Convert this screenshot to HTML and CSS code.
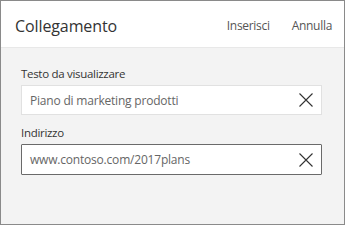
FILE: index.html
```html
<!DOCTYPE html>
<html lang="it">
<head>
<meta charset="utf-8">
<title>Collegamento</title>
<link rel="stylesheet" href="styles.css">
</head>
<body>
<div class="dialog">
  <header class="header">
    <h1 class="title">Collegamento</h1>
    <nav class="actions">
      <span class="action">Inserisci</span>
      <span class="action">Annulla</span>
    </nav>
  </header>
  <main class="form">
    <div class="field">
      <label class="label">Testo da visualizzare</label>
      <div class="input">
        <span class="value">Piano di marketing prodotti</span>
        <svg class="clear" width="14" height="14" viewBox="0 0 14 14"><path d="M0.5 0.5L13.5 13.5M13.5 0.5L0.5 13.5" stroke="#333" stroke-width="1.1" fill="none"/></svg>
      </div>
    </div>
    <div class="field">
      <label class="label">Indirizzo</label>
      <div class="input focused">
        <span class="value">www.contoso.com/2017plans</span>
        <svg class="clear" width="14" height="14" viewBox="0 0 14 14"><path d="M0.5 0.5L13.5 13.5M13.5 0.5L0.5 13.5" stroke="#333" stroke-width="1.1" fill="none"/></svg>
      </div>
    </div>
  </main>
</div>
</body>
</html>
```
FILE: styles.css
```css
* { box-sizing: border-box; }
html, body { margin: 0; padding: 0; }
body { font-family: "Open Sans", "Noto Sans", sans-serif; }
.dialog {
  width: 345px;
  height: 225px;
  border: 1px solid #8a8a8a;
  background: #f3f3f3;
  display: flex;
  flex-direction: column;
}
.header {
  height: 47px;
  flex: none;
  background: #fff;
  border-bottom: 1px solid #e8e8e8;
  display: flex;
  align-items: center;
  justify-content: space-between;
  padding: 3px 12px 0 14px;
}
.title {
  margin: 0;
  font-size: 16px;
  font-weight: normal;
  color: #333;
  letter-spacing: -0.1px;
}
.actions {
  display: flex;
  gap: 22px;
  font-size: 12px;
  color: #555;
  letter-spacing: -0.3px;
}
.form {
  padding: 18px 22px 0 20px;
  display: flex;
  flex-direction: column;
  gap: 10px;
}
.field { display: flex; flex-direction: column; gap: 3px; }
.label {
  font-size: 11.5px;
  color: #333;
  line-height: 16px;
  letter-spacing: -0.3px;
}
.input {
  height: 30px;
  background: #fff;
  border: 1px solid #e1e1e1;
  display: flex;
  align-items: center;
  justify-content: space-between;
  padding: 0 8px 0 8px;
}
.input.focused { border-color: #6a6a6a; height: 31px; border-radius: 1px; }
.value {
  font-size: 12px;
  color: #666;
  letter-spacing: -0.2px;
}
.clear { display: block; }
```
